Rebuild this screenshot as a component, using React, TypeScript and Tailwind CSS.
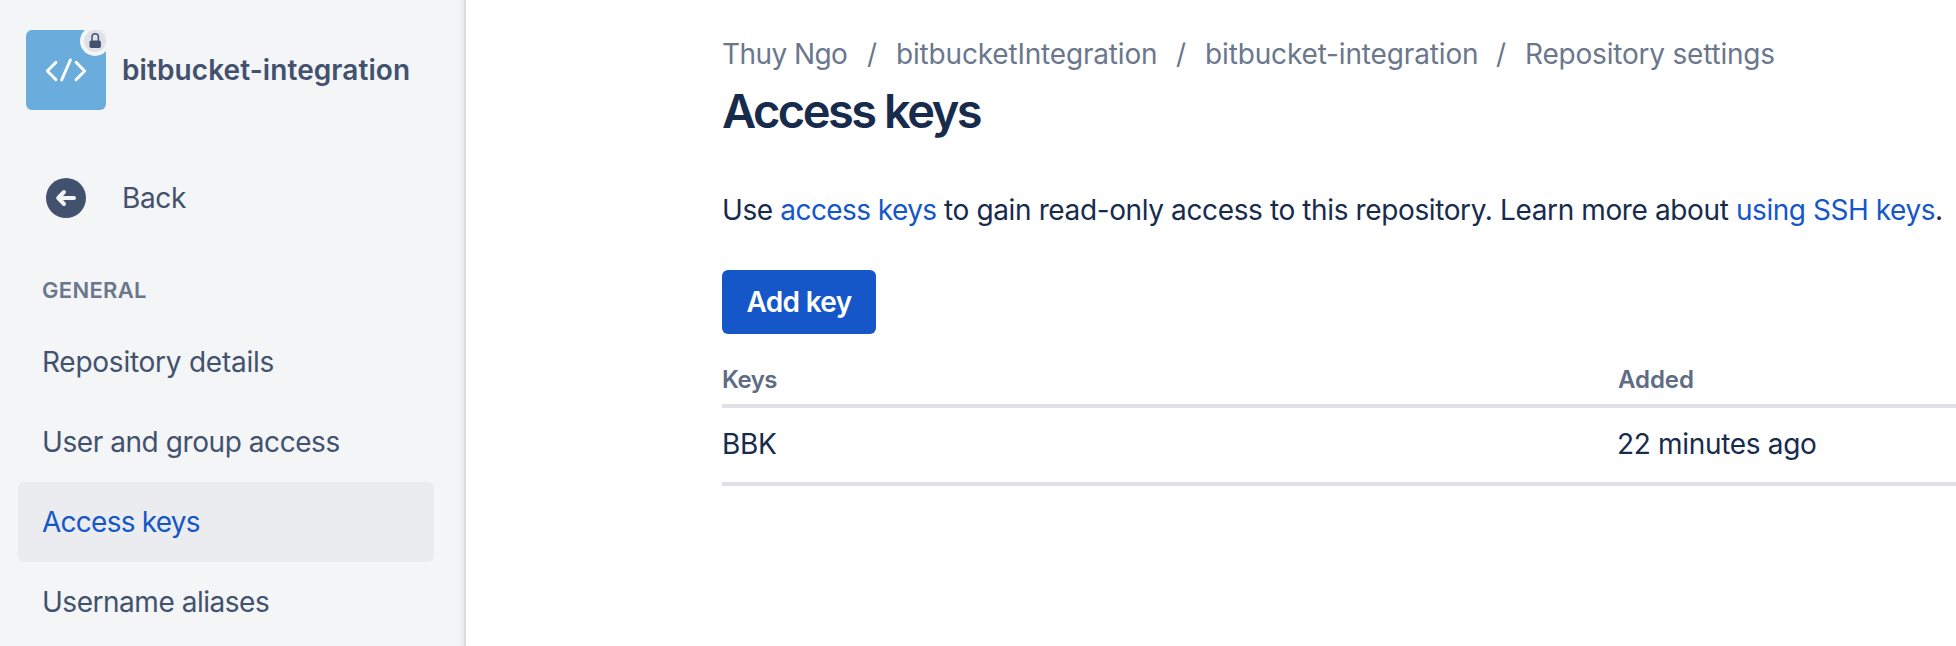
import React from "react";

const navItems = [
  { label: "Repository details", className: "text-[#42526e] tracking-[-0.25px]" },
  { label: "User and group access", className: "text-[#42526e] tracking-[-0.43px]" },
  { label: "Access keys", className: "bg-[#ebecf0] text-[#1557c8] tracking-[-0.75px]" },
  { label: "Username aliases", className: "text-[#42526e] tracking-[-0.47px]" },
];

const crumbs = [
  { label: "Thuy Ngo", className: "w-[145px] tracking-[-0.58px]" },
  { label: "bitbucketIntegration", className: "w-[281px] tracking-[-0.18px]" },
  { label: "bitbucket-integration", className: "w-[292px] tracking-[-0.15px]" },
  { label: "Repository settings", className: "tracking-[-0.2px]" },
];

function RepositoryAvatar() {
  return (
    <svg className="size-20 shrink-0 rounded-md" viewBox="0 0 80 80" fill="none">
      <rect width="80" height="80" fill="#6aaddc" />
      <g stroke="#fff" strokeWidth="2.9" strokeLinecap="round" strokeLinejoin="round">
        <path d="M29.9 32.4 21.3 41l8.6 8.6" />
        <path d="M44.4 29.9 35.7 49.9" />
        <path d="M50.1 32.4 58.7 41l-8.6 8.6" />
      </g>
      <circle cx="69" cy="11" r="15" fill="#f4f5f7" />
      <circle cx="69" cy="11" r="11" fill="#dfe1e6" />
      <rect x="63.5" y="10.6" width="11.4" height="7.5" rx="1.8" fill="#42526e" />
      <path d="M66 11.5V7a3.2 3.2 0 0 1 6.4 0v4.5" stroke="#42526e" strokeWidth="1.5" />
    </svg>
  );
}

function BackIcon() {
  return (
    <svg className="size-10 shrink-0" viewBox="0 0 40 40" fill="none">
      <circle cx="20" cy="20" r="20" fill="#42526e" />
      <path
        d="M28 20H12.5M18 14l-5.8 6 5.8 6"
        stroke="#f4f5f7"
        strokeWidth="4"
        strokeLinecap="round"
        strokeLinejoin="round"
      />
    </svg>
  );
}

function Sidebar() {
  return (
    <aside className="flex w-[466px] shrink-0 border-r-2 border-[#dcdddf] bg-[#f4f5f7] text-[#42526e]">
      <div className="flex-1 pl-[18px]">
        <div className="mt-[30px] ml-2 flex h-20 items-center">
          <RepositoryAvatar />
          <span className="ml-4 font-semibold tracking-[0.085px]">bitbucket-integration</span>
        </div>
        <a className="mt-12 ml-7 flex h-20 items-center">
          <BackIcon />
          <span className="ml-9 tracking-[-0.35px]">Back</span>
        </a>
        <h2 className="mt-9 ml-6 h-8 text-[22px] leading-8 font-semibold tracking-[0.3px] text-[#6b778c]">GENERAL</h2>
        <nav className="mt-4 w-[416px]">
          {navItems.map((item) => (
            <a key={item.label} className={`flex h-20 items-center rounded-md pl-6 ${item.className}`}>
              {item.label}
            </a>
          ))}
        </nav>
      </div>
      <div className="w-1.5 bg-linear-to-r from-[#f4f5f7] to-[#e9eaec]" />
    </aside>
  );
}

export default function App() {
  return (
    <div className="flex h-[646px] w-[1956px] overflow-hidden bg-white font-['Inter',sans-serif] text-[28px] leading-10 whitespace-nowrap text-[#172b4d]">
      <Sidebar />
      <main className="min-w-0 flex-1 pt-[34px] pl-64">
        <nav className="flex h-10 text-[#6b778c]">
          {crumbs.map((crumb, i) => (
            <React.Fragment key={crumb.label}>
              {i > 0 && <span className="w-[29px]">/</span>}
              <span className={`shrink-0 ${crumb.className} ${i > 0 ? "-mr-px" : ""}`}>{crumb.label}</span>
            </React.Fragment>
          ))}
        </nav>
        <h1 className="mt-[9px] text-[47px] leading-14 font-semibold tracking-[-2.5px]">Access keys</h1>
        <p className="mt-[51px] tracking-[-0.38px]">
          Use <a className="tracking-[-0.57px] text-[#1557c8]">access keys</a> to gain read-only access to this
          repository. Learn more about <a className="tracking-[-0.45px] text-[#1557c8]">using SSH keys</a>.
        </p>
        <button className="mt-10 flex h-16 w-[154px] items-center justify-center rounded-md bg-[#1557c8] font-semibold tracking-[-0.7px] text-white">
          Add key
        </button>
        <div className="mt-6">
          <div className="flex h-[50px] border-b-4 border-[#dfe1e6] pt-[5px] text-[24px] leading-[34px] font-semibold text-[#5e6c84]">
            <div className="w-[896px] tracking-[-0.5px]">Keys</div>
            <div className="tracking-[-0.06px]">Added</div>
          </div>
          <div className="flex h-[78px] border-b-4 border-[#dfe1e6] pt-4">
            <div className="w-[895px] tracking-[-0.32px]">BBK</div>
            <div className="tracking-[-0.32px]">22 minutes ago</div>
          </div>
        </div>
      </main>
    </div>
  );
}
